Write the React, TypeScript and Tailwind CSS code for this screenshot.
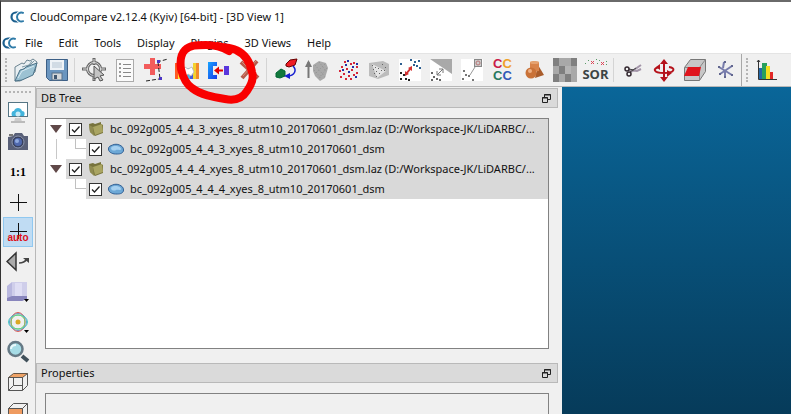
import type { ReactNode } from 'react'

type Tool = { label: string; icon: ReactNode; active?: boolean }

const MENUS = ['File', 'Edit', 'Tools', 'Display', 'Plugins', '3D Views', 'Help']

const TREE = [
  { name: 'bc_092g005_4_4_3_xyes_8_utm10_20170601_dsm', path: '.laz (D:/Workspace-JK/LiDARBC/...' },
  { name: 'bc_092g005_4_4_4_xyes_8_utm10_20170601_dsm', path: '.laz (D:/Workspace-JK/LiDARBC/...' },
]

function Icon({ children }: { children: ReactNode }) {
  return (
    <svg viewBox="0 0 24 24" className="size-6 shrink-0" fill="none" aria-hidden="true">
      {children}
    </svg>
  )
}

function Dots({ points, color, size = 2 }: { points: number[][]; color: string; size?: number }) {
  return (
    <g fill={color}>
      {points.map(([x, y]) => <rect key={`${x}-${y}`} x={x} y={y} width={size} height={size} />)}
    </g>
  )
}

function Logo() {
  return (
    <svg viewBox="0 0 14 12" className="h-3 w-3.5 shrink-0" fill="none" aria-hidden="true">
      <path d="M8.500 1.500H6A4.500 4.500 0 0 0 6 10.500H8.500" stroke="#1b5f8e" strokeWidth="2.200" />
      <path d="M13.800 2.200C9 .2 6.500 3 6.500 6s2.500 5.800 7.300 3.800" stroke="#fff" strokeWidth="3" />
      <path d="M13.800 2.200C10 .2 7 3 7 6s3 5.800 6.800 3.800" stroke="#2f7ba8" strokeWidth="2" />
    </svg>
  )
}

const FILE_TOOLS: Tool[] = [
  {
    label: 'Open',
    icon: (
      <Icon>
        <path d="M1 9l7-4 2 1 3-4 3 1 3-2 4 3-2 10-15 9H1z" fill="#e9eff2" stroke="#6b8390" />
        <path d="M8 9l7-2 3-4M8 12l9-6 3-3" stroke="#7d98a5" />
        <path d="M1 23l5-11 4-1 2-2 11-4-4 12-11 5z" fill="#9cc2d3" stroke="#4c7288" />
        <path d="M4 20l4-7 12-5" stroke="#d8eaf2" />
      </Icon>
    ),
  },
  {
    label: 'Save',
    icon: (
      <Icon>
        <path d="M1.500 1.500h21v21h-18l-3-3z" fill="#6a95bf" stroke="#3c5f86" />
        <rect x="5" y="2" width="14" height="10" fill="#eef3f7" />
        <path d="M7 5h10M7 7h10M7 9h10" stroke="#b4c4d2" />
        <rect x="7" y="15" width="10" height="7" fill="#d3d6d9" stroke="#56708a" />
        <rect x="9" y="17" width="3" height="4" fill="#3f5670" />
      </Icon>
    ),
  },
]

const EDIT_TOOLS: Tool[] = [
  {
    label: 'Point picking',
    icon: (
      <Icon>
        <circle cx="12" cy="11" r="6.500" stroke="#666" strokeWidth="3" />
        <path d="M12 0v7M12 16v7M0 11h7M17 11h7" stroke="#666" strokeWidth="3" />
        <circle cx="12" cy="11" r="6.500" stroke="#ddd" />
        <path d="M12 1v5M12 17v5M1 11h5M18 11h5" stroke="#ddd" />
        <path d="M12 8l10 9-4 1 3 4-3 1-2-4-4 2z" fill="#c4c4c4" stroke="#555" />
      </Icon>
    ),
  },
  {
    label: 'Point list',
    icon: (
      <Icon>
        <rect x="3.500" y="1.500" width="17" height="22" fill="#fafafa" stroke="#aaa" />
        <path d="M10 6.500h8M10 10.500h8M10 14.500h8M10 18.500h8" stroke="#888" />
        <Dots points={[[6, 5], [6, 9], [6, 13], [6, 17]]} color="#999" />
      </Icon>
    ),
  },
  {
    label: 'Add constant SF',
    icon: (
      <Icon>
        <path d="M8.500 0v17M0 8.500h17" stroke="#f25c5c" strokeWidth="5" />
        <path d="M13 4l11-3M14 4l2 17M2 23l13-2" stroke="#222" strokeDasharray="4 2" />
        <Dots points={[[13, 2], [15, 19]]} color="#4b35c5" size={3} />
      </Icon>
    ),
  },
  {
    label: 'Subsample',
    icon: (
      <Icon>
        <path d="M0 5h4v16H0z" fill="#ff5a24" />
        <path d="M3 5h3v16H3z" fill="#ffe52e" />
        <path d="M6 5h3v16H6z" fill="#55cf50" />
        <path d="M9 5h6v16H9z" fill="#47b5ee" />
        <path d="M15 5h3v16h-3z" fill="#4259dc" />
        <path d="M18 5h3v16h-3z" fill="#f3d22e" />
        <path d="M21 5h3v16h-3z" fill="#f28a2c" />
        <path d="M7 5h11v5H7z" fill="#eee" />
        <path d="M7 14l3-5 3 2 4-2 2 5-3 4-3-2-3 3z" fill="#fff" stroke="#bbb" />
      </Icon>
    ),
  },
  {
    label: 'Register',
    icon: (
      <Icon>
        <defs>
          <linearGradient id="reg" x2="1" y2="1">
            <stop stopColor="#18a5ff" />
            <stop offset="1" stopColor="#1838e8" />
          </linearGradient>
        </defs>
        <path d="M2 4h9v4H7v9h4v4H2z" fill="url(#reg)" />
        <path d="M8 12.500l5-4v3h4v2h-4v3z" fill="#e00000" />
        <rect x="18" y="8" width="5" height="9" fill="#5936dc" />
      </Icon>
    ),
  },
  {
    label: 'Delete',
    icon: (
      <Icon>
        <path d="M4 4l17 16M20 3L5 20" stroke="#b55b4c" strokeWidth="4" />
        <path d="M5 4l15 15M19 3L6 18" stroke="#d98b7a" />
      </Icon>
    ),
  },
]

const CLOUD_TOOLS: Tool[] = [
  {
    label: 'Fine registration',
    icon: (
      <Icon>
        <path d="M12 6l4-4 7-1-2 6-6 2-3-1z" fill="#ee1c24" stroke="#600" />
        <path d="M2 15l5-4 4 2v5l-5 2-4-1z" fill="#12783c" stroke="#063" />
        <path d="M19 8c4 4 2 10-6 10" stroke="#1720d0" strokeWidth="1.500" />
        <path d="M10 18l6-3v6z" fill="#1720d0" />
      </Icon>
    ),
  },
  {
    label: 'Normals',
    icon: (
      <Icon>
        <path d="M3.500 20V4" stroke="#777" strokeWidth="2" />
        <path d="M0 9l3.500-7L7 9z" fill="#777" />
        <path d="M8 7l6-4 7 2 2 5-3 10-5 3-5-5-2-5z" fill="#a9a9a9" />
        <path d="M10 7l10 12M14 4l7 9M9 12l8 9M20 6L10 16M22 10l-8 10" stroke="#929292" strokeDasharray="1 2" />
      </Icon>
    ),
  },
  {
    label: 'Segment dots',
    icon: (
      <Icon>
        <Dots color="#d52538" points={[[8, 3], [14, 5], [5, 8], [17, 4], [10, 10], [3, 12], [15, 11], [20, 8], [7, 15], [12, 17], [17, 16], [4, 18], [20, 14], [14, 20], [9, 20]]} />
        <Dots color="#2330a8" points={[[11, 2], [16, 8], [9, 6], [12, 13], [6, 11], [19, 18], [20, 5]]} />
      </Icon>
    ),
  },
  {
    label: 'Sample points',
    icon: (
      <Icon>
        <path d="M2 5l14-2 6 3v11l-11 4-9-3z" fill="#bcbcbc" />
        <path d="M5 6l14 7-9 7z" fill="#e4e4e4" />
        <Dots color="#666" size={1} points={[[5, 7], [8, 9], [6, 11], [11, 10], [9, 13], [14, 12], [7, 15], [12, 15], [17, 12], [9, 18], [15, 6], [18, 9]]} />
      </Icon>
    ),
  },
  {
    label: 'Cloud to cloud distance',
    icon: (
      <Icon>
        <path d="M1 1h22v22H1z" fill="#fff" />
        <Dots color="#222" points={[[2, 14], [5, 16], [2, 20], [7, 20], [10, 21]]} />
        <Dots color="#2d5f91" points={[[12, 1], [16, 3], [20, 2], [18, 7], [21, 9], [15, 6], [2, 5]]} />
        <path d="M8.500 15.500l4-5" stroke="#d33131" strokeWidth="2" />
        <path d="M7 18v-5l4 3zM14 8l-4 2 4 3z" fill="#d33131" />
      </Icon>
    ),
  },
  {
    label: 'Cloud to mesh distance',
    icon: (
      <Icon>
        <path d="M1 1h22v22H1z" fill="#fff" />
        <path d="M1 1h22v15z" fill="#a9a9a9" />
        <path d="M8 17l6-6M8 13v4h4M10 11h4v4" stroke="#777" />
        <Dots color="#666" points={[[2, 14], [4, 18], [2, 21], [7, 20], [10, 21]]} />
      </Icon>
    ),
  },
  {
    label: 'Closest point',
    icon: (
      <Icon>
        <path d="M1 1h22v22H1z" fill="#fff" />
        <rect x="14.500" y="1.500" width="7" height="7" fill="#ccc" stroke="#888" />
        <circle cx="18" cy="5" r="2" stroke="#b77" />
        <path d="M10 17l5-8" stroke="#999" />
        <Dots color="#777" points={[[3, 12], [5, 16], [2, 20], [8, 17], [12, 21]]} />
      </Icon>
    ),
  },
  {
    label: 'Statistical test',
    icon: (
      <span className="grid grid-cols-2 font-['Liberation_Sans',sans-serif] text-[13px] leading-3 font-bold">
        <span className="text-[#c91d48]">C</span>
        <span className="text-[#efa12c]">C</span>
        <span className="text-[#28795e]">C</span>
        <span className="text-[#3157b9]">C</span>
      </span>
    ),
  },
  {
    label: 'Primitive factory',
    icon: (
      <Icon>
        <path d="M16 7l6 10-9 3z" fill="#a95c2b" />
        <path d="M8 4l4-1 5 1v9l-9 1z" fill="#d8834a" />
        <ellipse cx="12.500" cy="4.500" rx="4.500" ry="1.500" fill="#e5a270" />
        <circle cx="9" cy="15" r="5.500" fill="#c97238" />
        <circle cx="8" cy="13" r="2" fill="#eeb084" />
      </Icon>
    ),
  },
  {
    label: 'Checkerboard',
    icon: (
      <Icon>
        <path d="M0 0h24v24H0z" fill="#a8a8a8" />
        <path d="M0 0h6v8H0zM12 0h12v8h-6v8h-6V8h6V0zM6 8h6v8H6zM0 16h6v8H0zM12 16h6v8h-6z" fill="#7f7f7f" />
        <path d="M12 8h6v8h-6z" fill="#b4b4b4" />
      </Icon>
    ),
  },
  {
    label: 'SOR filter',
    icon: (
      <span className="flex flex-col items-center">
        <svg viewBox="0 0 24 8" className="h-2 w-6" fill="none" aria-hidden="true">
          <path d="M7 3l3 3M10 3L7 6M17 4l3 3M20 4l-3 3" stroke="#d45" />
          <Dots color="#5a9a68" size={1} points={[[1, 5], [4, 2], [12, 1], [13, 5], [15, 2], [22, 3], [22, 6]]} />
        </svg>
        <span className="font-['Open_Sans',sans-serif] text-[13px] leading-4 font-bold text-[#3d4444]">SOR</span>
      </span>
    ),
  },
]

const SEGMENT_TOOLS: Tool[] = [
  {
    label: 'Segment',
    icon: (
      <Icon>
        <path d="M10 14l10-7M8 12l8 1 4-2" stroke="#a294a8" strokeWidth="2" />
        <path d="M9 14l6-4M8 11l5 1" stroke="#444" />
        <circle cx="6" cy="11" r="2" stroke="#332830" strokeWidth="1.500" />
        <circle cx="8" cy="16" r="2" stroke="#332830" strokeWidth="1.500" />
      </Icon>
    ),
  },
  {
    label: 'Translate/Rotate',
    icon: (
      <Icon>
        <path d="M12 4v17M17 9c7 1 6 6-5 6S0 10 8 9" stroke="#b5121b" strokeWidth="2" />
        <path d="M12 1l4 5H8zM12 24l4-5H8zM8 6v6L4 9zM15 12v7l5-4z" fill="#b5121b" />
      </Icon>
    ),
  },
  {
    label: 'Cross section',
    icon: (
      <Icon>
        <path d="M1.500 9.500l6-8h15v12l-6 9h-15z" fill="#c7c7c7" stroke="#777" />
        <path d="M1.500 9.500h15l6-8M16.500 9.500v13" stroke="#888" />
        <path d="M1 18l4-9h13l-2 9z" fill="#df141c" />
      </Icon>
    ),
  },
  {
    label: 'Trace polyline',
    icon: (
      <Icon>
        <path d="M5 9l13 8M18 8L6 16M10 4l-1 6M11 13v6" stroke="#777cab" strokeWidth="2" />
        <Dots color="#62678f" points={[[4, 8], [10, 3], [17, 7], [17, 16], [5, 15], [10, 18]]} />
      </Icon>
    ),
  },
]

const HISTOGRAM: Tool = {
  label: 'Histogram',
  icon: (
    <Icon>
      <path d="M3 10h4v11H3z" fill="#2367a7" />
      <path d="M6 5h5v16H6z" fill="#28a05c" />
      <path d="M10 8h4v13h-4z" fill="#f4df22" />
      <path d="M14 14h3v7h-3z" fill="#e22827" />
      <path d="M2.500 2v19.500H21M1 4l1.500-2L4 4" stroke="#333" />
    </Icon>
  ),
}

const VIEW_TOOLS: Tool[] = [
  {
    label: 'Display settings',
    icon: (
      <Icon>
        <path d="M9 18h6l1 4H8z" fill="#ccc" />
        <path d="M5 22h14" stroke="#bbb" strokeWidth="2" />
        <rect x="2.500" y="2.500" width="19" height="14" fill="#fff" stroke="#557584" />
        <path d="M6 16c-1-3 0-5 2-5 1-4 7-4 8 0 3 0 3 3 2 5z" fill="#42b4dc" />
        <circle cx="12" cy="14" r="2.500" fill="#c9ecf7" />
      </Icon>
    ),
  },
  {
    label: 'Screenshot',
    icon: (
      <Icon>
        <path d="M2 7l5-1 2-3h7l2 3h4v14H2z" fill="#596078" />
        <path d="M3 4h4v2H3z" fill="#777" />
        <circle cx="12" cy="12" r="6" fill="#38415f" stroke="#8d96ae" />
        <circle cx="12" cy="12" r="4" fill="#5069ae" />
        <circle cx="11" cy="11" r="2" fill="#8fa9de" />
      </Icon>
    ),
  },
  {
    label: 'Zoom 1:1',
    icon: <span className="font-['Liberation_Serif',serif] text-[12px] leading-4 font-bold text-black">1:1</span>,
  },
  { label: 'Pick rotation center', icon: <Icon><path d="M12.500 4v17M4 12.500h17" stroke="#111" /></Icon> },
  {
    label: 'Auto-pick rotation center',
    active: true,
    icon: (
      <span className="flex flex-col items-center">
        <svg viewBox="0 0 18 18" className="-mb-1.5 size-[18px]" aria-hidden="true">
          <path d="M9.500 1v16M1 9.500h17" stroke="#111" />
        </svg>
        <span className="font-['Liberation_Sans',sans-serif] text-[10px] leading-2 font-bold text-[#df1018]">auto</span>
      </span>
    ),
  },
  {
    label: 'View direction',
    icon: (
      <Icon>
        <path d="M10 3v17L1 11.500z" fill="#aaa" stroke="#333" strokeWidth="1.500" />
        <path d="M13 13c4 0 6-1 8-4" stroke="#444" strokeWidth="1.500" />
        <path d="M17 8h6v5z" fill="#444" />
      </Icon>
    ),
  },
  {
    label: 'Set view',
    icon: (
      <Icon>
        <path d="M1 6l5-4h15v16l-5 3H1z" fill="#b9b8df" />
        <path d="M6 2h15v14H6z" fill="#cfceea" />
        <path d="M9 3h7v13H9z" fill="#dfdef4" />
        <path d="M1 18l5-2h15v3l-5 2H1z" fill="#8885bc" />
        <path d="M18 19h5l-2.500 3z" fill="#000" />
      </Icon>
    ),
  },
  {
    label: 'Pivot visibility',
    icon: (
      <Icon>
        <circle cx="12" cy="12" r="8.500" stroke="#5b9ad8" />
        <ellipse cx="12" cy="12" rx="7" ry="9.500" stroke="#de5951" />
        <ellipse cx="12" cy="12" rx="9.500" ry="7" stroke="#46c8c0" />
        <circle cx="12" cy="12" r="7" stroke="#72d36d" />
        <circle cx="12" cy="12" r="2.500" fill="#dba824" />
        <path d="M18 20h5l-2.500 3z" fill="#000" />
      </Icon>
    ),
  },
  {
    label: 'Zoom',
    icon: (
      <Icon>
        <path d="M16 16l6 5" stroke="#40505a" strokeWidth="4" />
        <circle cx="9.500" cy="9" r="7" fill="#a6dce6" stroke="#657985" strokeWidth="2.500" />
        <path d="M5 9c0-3 2-4 5-4" stroke="#e8f8fb" strokeWidth="2" />
      </Icon>
    ),
  },
  {
    label: 'Top view',
    icon: (
      <Icon>
        <path d="M2.500 7.500l5-4h14l-5 4z" fill="#eea266" stroke="#654" />
        <path d="M2.500 7.500h14v13h-14zM16.500 20.500l5-5v-12M7.500 7.500v8h9M7.500 15.500l-5 5" stroke="#555" />
      </Icon>
    ),
  },
  {
    label: 'Front view',
    icon: (
      <Icon>
        <path d="M2 8h15v13H2z" fill="#ef9b60" />
        <path d="M2.500 8.500l5-5h14v13l-5 4h-14zM2.500 8.500h14v12M16.500 8.500l5-5" stroke="#555" />
      </Icon>
    ),
  },
]

function ToolButton({ tool }: { tool: Tool }) {
  return (
    <button type="button" aria-label={tool.label} className="flex w-[31px] shrink-0 items-center justify-center">
      {tool.icon}
    </button>
  )
}

function Separator() {
  return <div className="ml-0.5 mr-[3px] my-1 w-px shrink-0 bg-[#d4d4d4]" />
}

function Toolbar() {
  return (
    <div className="flex h-[34px] shrink-0 items-stretch overflow-hidden border-y border-t-[#e4e4e4] border-b-[#b8b8b8] bg-[#f0f0f0]">
      <div className="my-1 ml-1 mr-[3px] w-0.5 shrink-0 border-l-2 border-dotted border-[#b5b5b5]" />
      {FILE_TOOLS.map((t) => <ToolButton key={t.label} tool={t} />)}
      <Separator />
      {EDIT_TOOLS.map((t) => <ToolButton key={t.label} tool={t} />)}
      <Separator />
      {CLOUD_TOOLS.map((t) => <ToolButton key={t.label} tool={t} />)}
      <Separator />
      {SEGMENT_TOOLS.map((t) => <ToolButton key={t.label} tool={t} />)}
      <div className="w-px shrink-0 bg-[#a8a8a8]" />
      <div className="my-1 mx-1 w-0.5 shrink-0 border-l-2 border-dotted border-[#b5b5b5]" />
      <ToolButton tool={HISTOGRAM} />
    </div>
  )
}

function ViewBar() {
  return (
    <div className="flex w-[35px] shrink-0 flex-col overflow-hidden border-r border-[#b8b8b8] bg-[#f0f0f0] px-0.5">
      <div className="mx-0.5 mt-1 mb-1 h-0.5 shrink-0 border-t-2 border-dotted border-[#b5b5b5]" />
      {VIEW_TOOLS.map((t) => (
        <button
          key={t.label}
          type="button"
          aria-label={t.label}
          className={
            t.active
              ? 'flex h-[30px] shrink-0 items-center justify-center border border-[#90c8f0] bg-[#c0dcf3]'
              : 'flex h-[30px] shrink-0 items-center justify-center'
          }
        >
          {t.icon}
        </button>
      ))}
    </div>
  )
}

function DockTitle({ title }: { title: string }) {
  return (
    <div className="flex h-5 shrink-0 items-center justify-between border border-[#b9b9b9] bg-[#dadada] pl-1 pr-1.5">
      <h2>{title}</h2>
      <button type="button" aria-label={`Float ${title}`}>
        <svg viewBox="0 0 9 9" className="size-[9px]" fill="none" aria-hidden="true">
          <path d="M2.500 3V.5h6v5H6M2 1h7" stroke="#222" />
          <path d="M.5 3.500h5v5h-5zM0 4h6" stroke="#222" />
        </svg>
      </button>
    </div>
  )
}

function Check({ label }: { label: string }) {
  return (
    <span className="relative flex size-[13px] shrink-0">
      <input
        type="checkbox"
        defaultChecked
        aria-label={label}
        className="peer size-[13px] appearance-none border border-[#333] bg-white"
      />
      <svg
        viewBox="0 0 13 13"
        className="pointer-events-none absolute inset-0 hidden size-[13px] peer-checked:block"
        fill="none"
        aria-hidden="true"
      >
        <path d="M3 6.500l2.500 2.500 5-5.500" stroke="#222" strokeWidth="1.300" />
      </svg>
    </span>
  )
}

function TreeNode({ name, path, last }: { name: string; path: string; last: boolean }) {
  return (
    <li>
      <div className="flex h-5 items-stretch">
        <button type="button" aria-label="Collapse" className="flex w-5 shrink-0 items-center justify-center">
          <svg viewBox="0 0 12 8" className="h-2 w-3" aria-hidden="true">
            <path d="M0 0h12L6 8z" fill="#604848" />
          </svg>
        </button>
        <div className="flex min-w-0 flex-1 items-center bg-[#d9d9d9] pl-[3px]">
          <Check label={name + path} />
          <svg viewBox="0 0 16 16" className="mx-1.5 size-4 shrink-0" aria-hidden="true">
            <path d="M1 3l4-1 2 1 6-2v2l2 1v8l-8 3-5-4z" fill="#77733c" />
            <path d="M1 4l4 2 1 9-4-4z" fill="#8f8b51" />
            <path d="M5 6l9-3 1 8-8 3z" fill="#aaa562" />
          </svg>
          <span className="truncate">{name + path}</span>
        </div>
      </div>
      <div className="flex h-5 items-stretch">
        <div className="flex w-5 shrink-0 justify-center">
          {!last && <div className="w-px bg-[#c8c8c8]" />}
        </div>
        <div className="w-5 shrink-0 pl-[9px]">
          <div className="h-2.5 border-b border-l border-[#c0c0c0]" />
        </div>
        <div className="flex min-w-0 flex-1 items-center bg-[#d9d9d9] pl-[3px]">
          <Check label={name} />
          <svg viewBox="0 0 16 16" className="mx-1.5 size-4 shrink-0" aria-hidden="true">
            <path d="M.5 8c0-3 2-3 4-4s5-1 7 0 4 2 4 5-3 4-6 4-4 0-6-1-3-2-3-4z" fill="#6da8d6" stroke="#315f94" />
            <path d="M3 7c1-2 3-2 5-2s5 1 5 3-4 0-5 1-5 1-5-2z" fill="#a6d0f0" />
          </svg>
          <span className="truncate">{name}</span>
        </div>
      </div>
    </li>
  )
}

// Freehand ring around the align tool
function Marker() {
  return (
    <svg
      viewBox="0 0 86 68"
      className="pointer-events-none absolute top-9 left-[173px] h-[68px] w-[86px]"
      fill="none"
      aria-hidden="true"
    >
      <path
        d="M55 13C48 9 40 7 32 7C23 7 16 7 11 12C6 17 6 24 7 31C9 40 12 46 18 50C27 57 39 59 51 61C61 63 68 61 73 53C78 46 80 40 78 34C76 24 71 16 62 12C56 9 50 10 44 8"
        stroke="#f90000"
        strokeWidth="8"
        strokeLinecap="round"
        strokeLinejoin="round"
      />
    </svg>
  )
}

export default function App() {
  return (
    <div className="relative flex h-screen flex-col overflow-hidden border-t-2 border-l border-t-[#6a6a6a] border-l-[#333] bg-white font-['Noto_Sans','Open_Sans',sans-serif] text-[11px] leading-4 text-[#111]">
      <header className="flex h-[30px] shrink-0 items-center gap-1.5 pl-[9px]">
        <Logo />
        <h1>CloudCompare v2.12.4 (Kyiv) [64-bit] - [3D View 1]</h1>
      </header>
      <nav className="flex h-[21px] shrink-0 items-center pl-px">
        <Logo />
        <div className="ml-[9px] flex gap-4">
          {MENUS.map((m) => <button key={m} type="button">{m}</button>)}
        </div>
      </nav>
      <Toolbar />
      <div className="flex min-h-0 flex-1">
        <ViewBar />
        <aside className="flex w-[526px] shrink-0 flex-col bg-[#f0f0f0] pt-px pr-1">
          <DockTitle title="DB Tree" />
          <ul className="mx-[9px] mt-2.5 mb-3.5 h-[231px] shrink-0 border border-[#828282] bg-white">
            {TREE.map((n, i) => (
              <TreeNode key={n.name} name={n.name} path={n.path} last={i === TREE.length - 1} />
            ))}
          </ul>
          <DockTitle title="Properties" />
          <div className="mx-[9px] mt-2.5 flex-1 border border-b-0 border-[#828282]" />
        </aside>
        <main className="flex-1 bg-linear-to-b from-[#0a6699] to-[#063b5a]" />
      </div>
      <Marker />
    </div>
  )
}
